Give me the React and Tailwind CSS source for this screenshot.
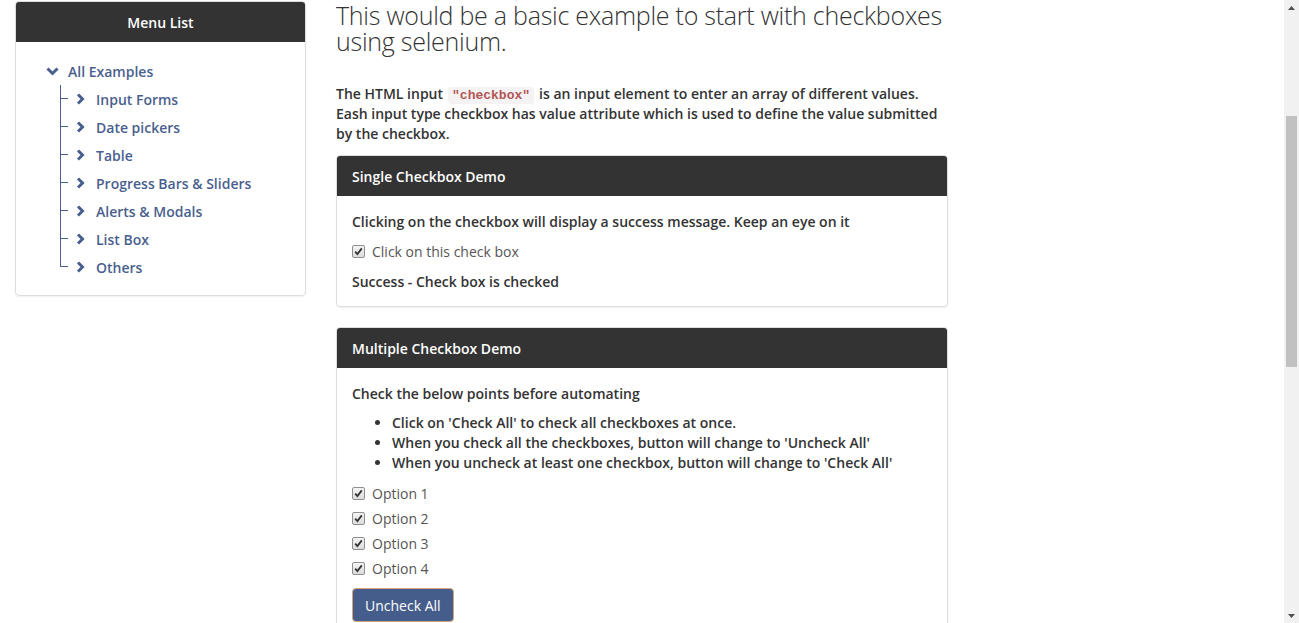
import React, { useState } from "react";

const FONT = { fontFamily: "'Open Sans', 'Noto Sans', sans-serif" };

function ChevronRight() {
    return (
        <svg width="9" height="12" viewBox="0 0 9 12" className="shrink-0">
            <polyline points="2,1.5 6.5,6 2,10.5" fill="none" stroke="#4a5f8e" strokeWidth="3" />
        </svg>
    );
}

function ChevronDown() {
    return (
        <svg width="13" height="9" viewBox="0 0 13 9" className="shrink-0">
            <polyline points="1.5,1.5 6.5,6.5 11.5,1.5" fill="none" stroke="#4a5f8e" strokeWidth="3" />
        </svg>
    );
}

function Check({ checked, onChange, label }) {
    return (
        <label className="flex items-center gap-[7px] cursor-pointer text-[#555] font-normal">
            <span
                onClick={onChange}
                className="w-[13px] h-[13px] rounded-[2px] border border-[#8f8f8f] bg-gradient-to-b from-[#f4f4f4] to-[#dcdcdc] flex items-center justify-center"
            >
                {checked && (
                    <svg width="9" height="9" viewBox="0 0 9 9">
                        <polyline points="1.2,4.6 3.4,7 7.8,1.4" fill="none" stroke="#333" strokeWidth="1.8" />
                    </svg>
                )}
            </span>
            {label}
        </label>
    );
}

const menu = ["Input Forms", "Date pickers", "Table", "Progress Bars & Sliders", "Alerts & Modals", "List Box", "Others"];

export default function App() {
    const [single, setSingle] = useState(true);
    const [options, setOptions] = useState([true, true, true, true]);
    const allChecked = options.every(Boolean);

    return (
        <div className="flex h-[623px] overflow-hidden bg-white text-[#333]" style={FONT}>
            <div className="flex-1 px-[15px] flex gap-[30px]">
                {/* left menu */}
                <div className="w-[291px] shrink-0 pt-[1px]">
                    <div className="border border-[#ddd] rounded-[4px] shadow-[0_1px_2px_rgba(0,0,0,0.06)]">
                        <div className="h-[40px] bg-[#333] rounded-t-[3px] flex items-center justify-center text-white font-semibold text-[14px]">
                            Menu List
                        </div>
                        <div className="pt-[15px] pb-[14px] pl-[30px] text-[#4a5f8e] font-semibold text-[14px]">
                            <div className="h-[28px] flex items-center gap-[9px]">
                                <ChevronDown />
                                <span>All Examples</span>
                            </div>
                            <ul className="ml-[14px]">
                                {menu.map((item, i) => (
                                    <li key={item} className="h-[28px] flex">
                                        <div className="w-[8px] flex flex-col">
                                            <div className="h-1/2 border-l border-b border-[#4a5f8e]" />
                                            <div className={"h-1/2 border-l " + (i === menu.length - 1 ? "border-transparent" : "border-[#4a5f8e]")} />
                                        </div>
                                        <div className="flex items-center ml-[8px] gap-[11px]">
                                            <ChevronRight />
                                            <span>{item}</span>
                                        </div>
                                    </li>
                                ))}
                            </ul>
                        </div>
                    </div>
                </div>

                {/* main column */}
                <div className="w-[612px] shrink-0">
                    <h3 className="text-[25px] leading-[26px] tracking-[-0.25px] font-light text-[#333] mt-[2px]">
                        This would be a basic example to start with checkboxes using selenium.
                    </h3>
                    <p className="mt-[30px] text-[14px] leading-[20px] font-semibold text-[#333]">
                        The HTML input
                        <code className="mx-[5px] font-['Liberation_Mono',monospace] text-[13px] leading-none font-bold text-[#b35555] bg-[#f4f2f2] rounded-[3px] px-[4px] py-[1px]">"checkbox"</code>
                        is an input element to enter an array of different values. Eash input type checkbox has value attribute which is used to define the value submitted by the checkbox.
                    </p>

                    <div className="mt-[11px] border border-[#ddd] rounded-[4px] shadow-[0_1px_2px_rgba(0,0,0,0.06)]">
                        <div className="h-[40px] bg-[#333] rounded-t-[3px] flex items-center px-[15px] text-white font-semibold text-[14px]">
                            Single Checkbox Demo
                        </div>
                        <div className="px-[15px] pt-[15px] pb-[15px] text-[14px] font-semibold">
                            <div className="h-[20px] flex items-center">Clicking on the checkbox will display a success message. Keep an eye on it</div>
                            <div className="h-[20px] mt-[10px] flex items-center">
                                <Check checked={single} onChange={() => setSingle(!single)} label="Click on this check box" />
                            </div>
                            <div className="h-[20px] mt-[10px] flex items-center">
                                {single ? "Success - Check box is checked" : ""}
                            </div>
                        </div>
                    </div>

                    <div className="mt-[20px] border border-[#ddd] rounded-[4px] shadow-[0_1px_2px_rgba(0,0,0,0.06)]">
                        <div className="h-[40px] bg-[#333] rounded-t-[3px] flex items-center px-[15px] text-white font-semibold text-[14px]">
                            Multiple Checkbox Demo
                        </div>
                        <div className="px-[15px] pt-[15px] pb-[15px] text-[14px] font-semibold">
                            <div className="h-[20px] flex items-center">Check the below points before automating</div>
                            <ul className="mt-[10px] list-disc pl-[40px] leading-[20px]">
                                <li>Click on 'Check All' to check all checkboxes at once.</li>
                                <li>When you check all the checkboxes, button will change to 'Uncheck All'</li>
                                <li>When you uncheck at least one checkbox, button will change to 'Check All'</li>
                            </ul>
                            <div className="mt-[10px] flex flex-col gap-[5px]">
                                {options.map((c, i) => (
                                    <div key={i} className="h-[20px] flex items-center">
                                        <Check
                                            checked={c}
                                            onChange={() => setOptions(options.map((v, j) => (j === i ? !v : v)))}
                                            label={`Option ${i + 1}`}
                                        />
                                    </div>
                                ))}
                            </div>
                            <button
                                onClick={() => setOptions(options.map(() => !allChecked))}
                                className="mt-[10px] h-[34px] px-[12px] bg-[#455d8b] border border-[#d4a57a] rounded-[4px] text-white font-normal text-[14px]"
                            >
                                {allChecked ? "Uncheck All" : "Check All"}
                            </button>
                        </div>
                    </div>
                </div>
            </div>

            {/* scrollbar */}
            <div className="w-[15px] shrink-0 bg-[#f1f1f1] flex flex-col items-center">
                <div className="h-[15px] flex items-center justify-center">
                    <svg width="7" height="4" viewBox="0 0 7 4"><polygon points="0,4 3.5,0 7,4" fill="#505050" /></svg>
                </div>
                <div className="h-[101px]" />
                <div className="w-[11px] h-[251px] bg-[#c1c1c1]" />
                <div className="flex-1" />
                <div className="h-[15px] flex items-center justify-center">
                    <svg width="7" height="4" viewBox="0 0 7 4"><polygon points="0,0 7,0 3.5,4" fill="#505050" /></svg>
                </div>
            </div>
        </div>
    );
}
